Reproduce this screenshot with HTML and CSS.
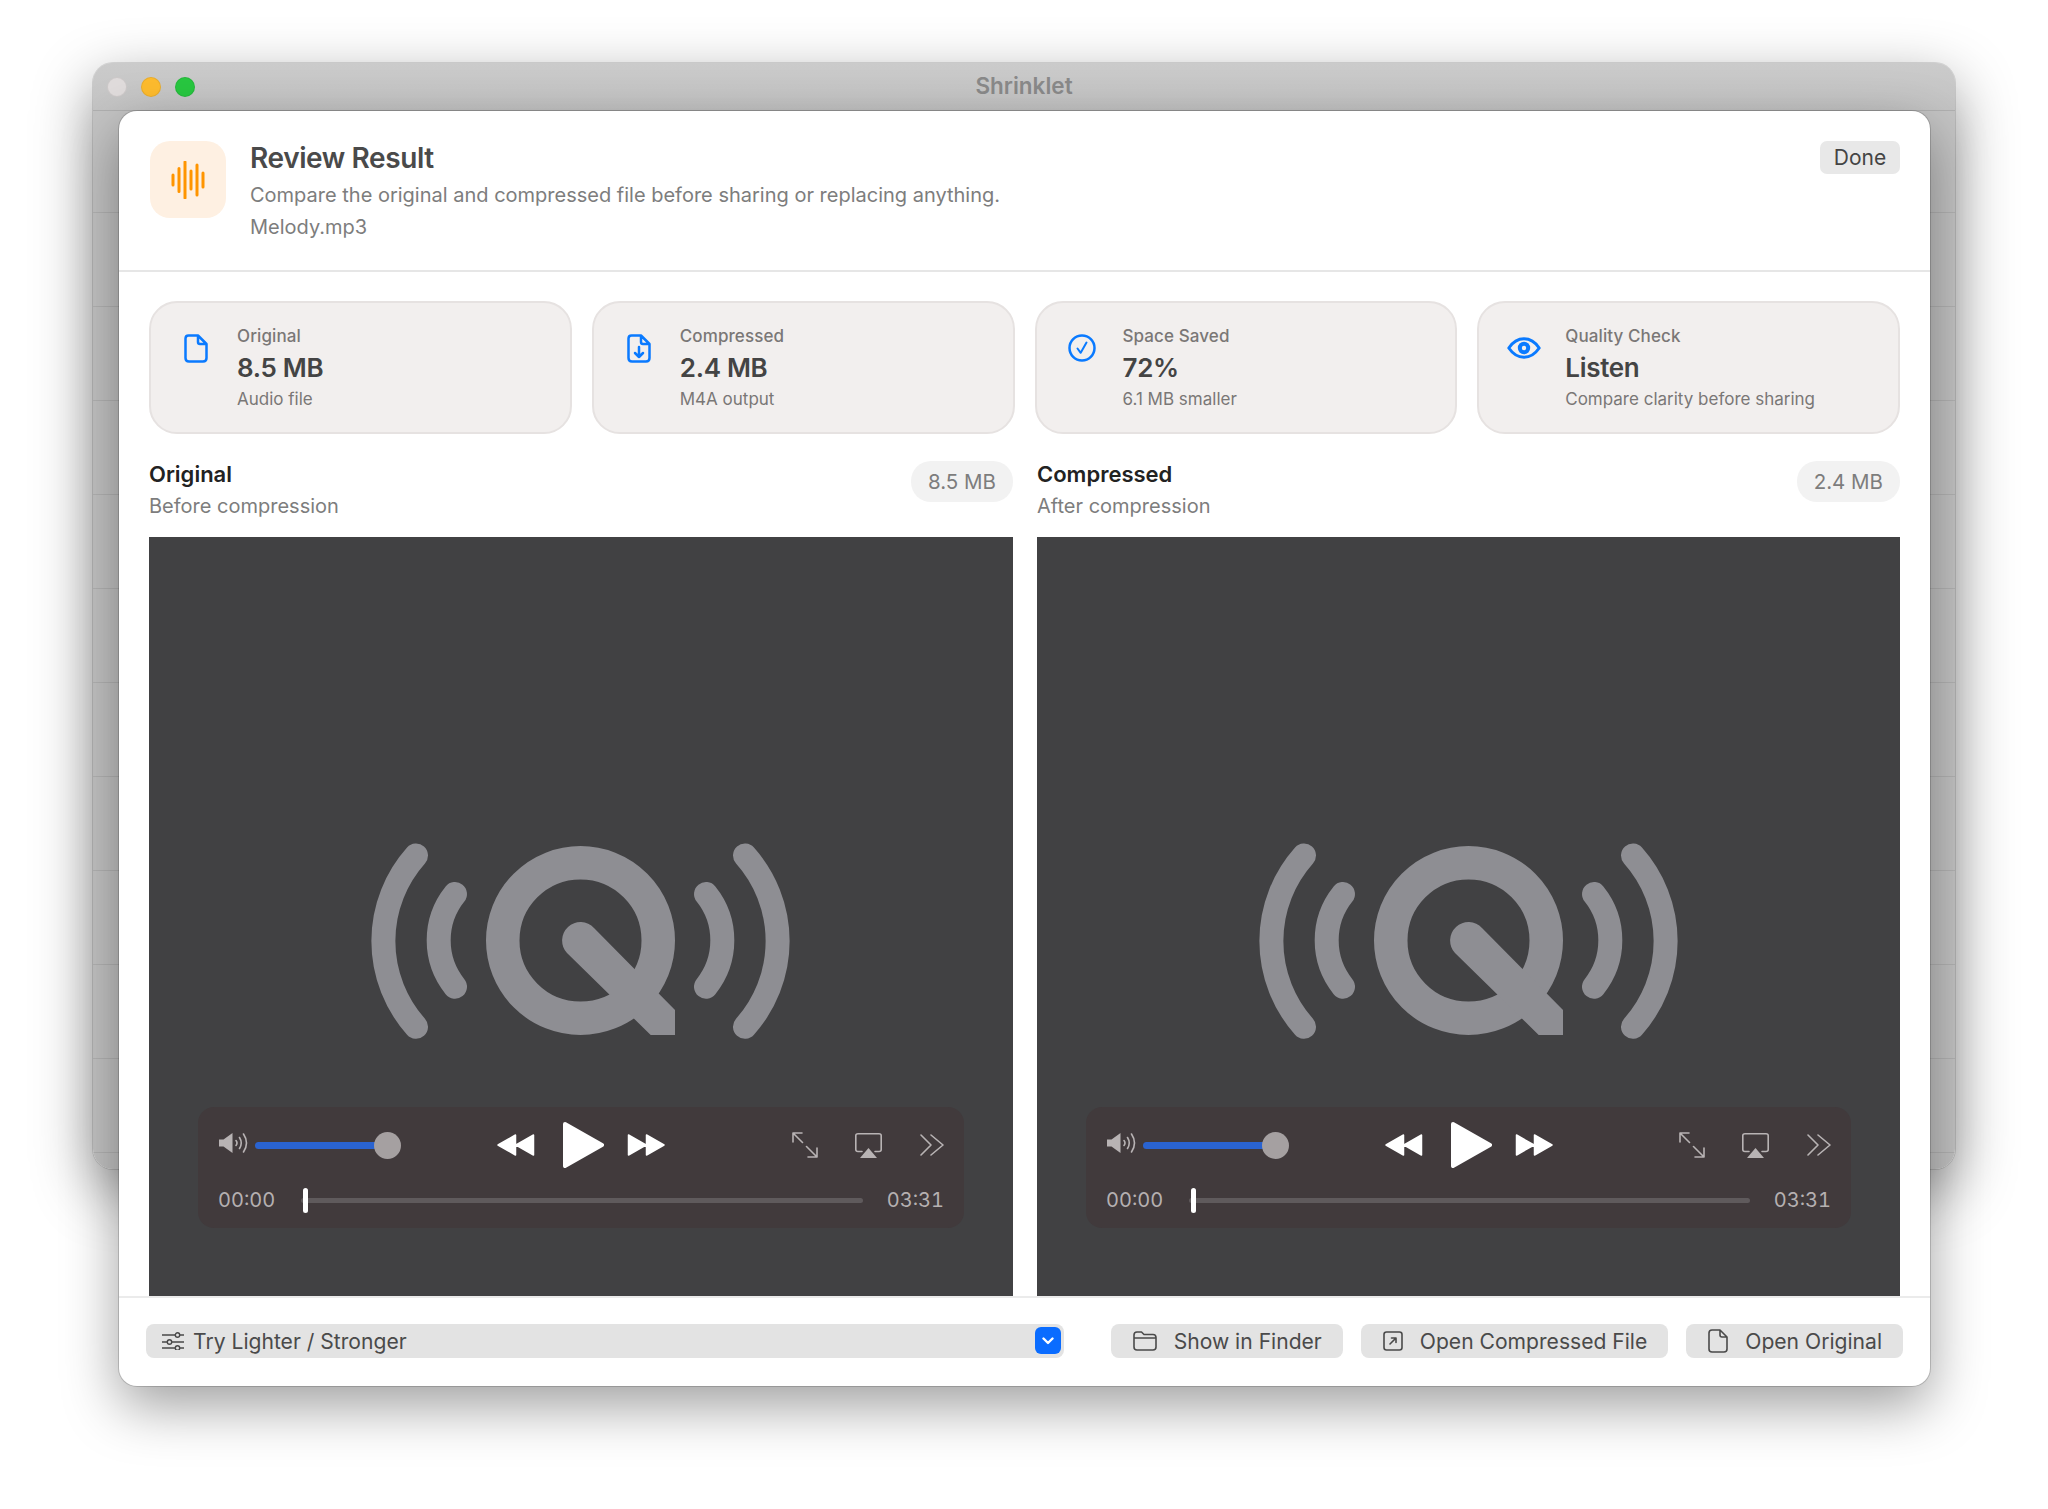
FILE: index.html
```html
<!DOCTYPE html>
<html>
    <head>
        <meta charset="utf-8">
        <title>Shrinklet</title>
        <link rel="stylesheet" href="styles.css">
    </head>
    <body>
        <svg class="sprite" width="0" height="0">
            <symbol id="q-logo" viewBox="0 0 480 240">
                <path class="q-arc" d="M76 35.500A128.6 128.6 0 0 0 76 206.700"/>
                <path class="q-arc" d="M115 74A74 74 0 0 0 115 166.7"/>
                <path class="q-arc" d="M405 35.500A128.6 128.6 0 0 1 405 206.700"/>
                <path class="q-arc" d="M366 74A74 74 0 0 1 366 166.7"/>
                <circle class="q-ring" cx="240.5" cy="120.5" r="77.75"/>
                <path class="q-tail" d="M254 108L335 190V215H310.7L227 133A18 18 0 0 1 254 108Z"/>
            </symbol>
            <symbol id="volume" viewBox="0 0 29 22">
                <path class="fill" d="M0 7.5H4.5L13.5 1V21L4.5 14.5H0Z"/>
                <path class="line" d="M17 8.5Q19 11 17 13.5M20.5 5.5Q24 11 20.5 16.5M24.5 2Q30.5 11 24.5 20"/>
            </symbol>
            <symbol id="rewind" viewBox="0 0 38 22">
                <path class="solid" d="M1 11L18.5 1V21ZM19 11L36.5 1V21Z"/>
            </symbol>
            <symbol id="forward" viewBox="0 0 38 22">
                <path class="solid" d="M1.5 1L19 11L1.5 21ZM19.5 1L37 11L19.5 21Z"/>
            </symbol>
            <symbol id="play" viewBox="0 0 41 46">
                <path class="solid-thick" d="M2 2L39 23L2 44Z"/>
            </symbol>
            <symbol id="expand" viewBox="0 0 26 26">
                <path class="line" d="M1 1L10.5 10.5M1 10V1H10M25 25L14.5 14.5M25 16V25H16"/>
            </symbol>
            <symbol id="airplay" viewBox="0 0 27 25">
                <path class="line" d="M7 18.5H3Q.8 18.5 .8 16.5V2.5Q.8 .8 3 .8H24Q26.2 .8 26.2 2.5V16.5Q26.2 18.5 24 18.5H20"/>
                <path class="fill" d="M13.5 15L22 25H5Z"/>
            </symbol>
            <symbol id="more" viewBox="0 0 24 22">
                <path class="line" d="M1 1L11 11L1 21M11 1L23 11L11 21"/>
            </symbol>
        </svg>

        <div class="window">
            <div class="titlebar">
                <span class="light light-close"></span>
                <span class="light light-min"></span>
                <span class="light light-max"></span>
                <span class="window-title">Shrinklet</span>
            </div>

            <div class="sheet">
                <div class="sheet-header">
                    <div class="app-tile">
                        <svg width="36" height="38" viewBox="0 0 36 38">
                            <path class="wave" d="M3 14V24M9 7.500V30.500M15 1V37M21 10V28M27 4V34M33 12V26"/>
                        </svg>
                    </div>
                    <div class="header-text">
                        <div class="header-title">Review Result</div>
                        <div class="header-line">Compare the original and compressed file before sharing or replacing anything.</div>
                        <div class="header-line header-file">Melody.mp3</div>
                    </div>
                    <div class="done-btn">Done</div>
                </div>

                <div class="sheet-body">
                    <div class="cards">
                        <div class="card">
                            <div class="card-icon">
                                <svg width="24" height="29" viewBox="0 0 24 29">
                                    <path class="blue" d="M4.500 1.500H14L22.500 10V24Q22.500 27.500 19 27.500H5Q1.500 27.500 1.500 24V4.500Q1.500 1.500 4.500 1.500ZM14 1.500V8Q14 10 16 10H22.500"/>
                                </svg>
                            </div>
                            <div>
                                <div class="card-label">Original</div>
                                <div class="card-value">8.5 MB</div>
                                <div class="card-sub">Audio file</div>
                            </div>
                        </div>
                        <div class="card">
                            <div class="card-icon">
                                <svg width="24" height="29" viewBox="0 0 24 29">
                                    <path class="blue" d="M4.500 1.500H14L22.500 10V24Q22.500 27.500 19 27.500H5Q1.500 27.500 1.500 24V4.500Q1.500 1.500 4.500 1.500ZM14 1.500V8Q14 10 16 10H22.500M12 13V23M8 19L12 23L16 19"/>
                                </svg>
                            </div>
                            <div>
                                <div class="card-label">Compressed</div>
                                <div class="card-value">2.4 MB</div>
                                <div class="card-sub">M4A output</div>
                            </div>
                        </div>
                        <div class="card">
                            <div class="card-icon">
                                <svg width="28" height="28" viewBox="0 0 28 28">
                                    <circle class="blue" cx="14" cy="14" r="12.500"/>
                                    <path class="blue thin" d="M9.500 14.500L12.700 18.800L18.500 8.500"/>
                                </svg>
                            </div>
                            <div>
                                <div class="card-label">Space Saved</div>
                                <div class="card-value">72%</div>
                                <div class="card-sub">6.1 MB smaller</div>
                            </div>
                        </div>
                        <div class="card">
                            <div class="card-icon">
                                <svg width="34" height="22" viewBox="0 0 34 22">
                                    <path class="blue eye" d="M1.800 11Q8 1.800 17 1.800T32.200 11Q26 20.200 17 20.200T1.800 11Z"/>
                                    <circle class="blue-fill" cx="17" cy="11" r="6.200"/>
                                    <circle class="card-bg-fill" cx="17" cy="11" r="2.200"/>
                                </svg>
                            </div>
                            <div>
                                <div class="card-label">Quality Check</div>
                                <div class="card-value">Listen</div>
                                <div class="card-sub">Compare clarity before sharing</div>
                            </div>
                        </div>
                    </div>

                    <div class="compare">
                        <div class="compare-col">
                            <div class="col-head">
                                <div>
                                    <div class="col-title">Original</div>
                                    <div class="col-sub">Before compression</div>
                                </div>
                                <div class="size-pill">8.5 MB</div>
                            </div>
                            <div class="player">
                                <svg class="player-logo"><use href="#q-logo"/></svg>
                                <div class="controls">
                                    <div class="controls-top">
                                        <svg class="ic-volume"><use href="#volume"/></svg>
                                        <div class="volume-track"><span class="volume-thumb"></span></div>
                                        <svg class="ic-rewind"><use href="#rewind"/></svg>
                                        <svg class="ic-play"><use href="#play"/></svg>
                                        <svg class="ic-forward"><use href="#forward"/></svg>
                                        <svg class="ic-expand"><use href="#expand"/></svg>
                                        <svg class="ic-airplay"><use href="#airplay"/></svg>
                                        <svg class="ic-more"><use href="#more"/></svg>
                                    </div>
                                    <div class="controls-bottom">
                                        <span class="time">00:00</span>
                                        <div class="scrub"><span class="scrub-knob"></span></div>
                                        <span class="time">03:31</span>
                                    </div>
                                </div>
                            </div>
                        </div>

                        <div class="compare-col">
                            <div class="col-head">
                                <div>
                                    <div class="col-title">Compressed</div>
                                    <div class="col-sub">After compression</div>
                                </div>
                                <div class="size-pill">2.4 MB</div>
                            </div>
                            <div class="player">
                                <svg class="player-logo"><use href="#q-logo"/></svg>
                                <div class="controls">
                                    <div class="controls-top">
                                        <svg class="ic-volume"><use href="#volume"/></svg>
                                        <div class="volume-track"><span class="volume-thumb"></span></div>
                                        <svg class="ic-rewind"><use href="#rewind"/></svg>
                                        <svg class="ic-play"><use href="#play"/></svg>
                                        <svg class="ic-forward"><use href="#forward"/></svg>
                                        <svg class="ic-expand"><use href="#expand"/></svg>
                                        <svg class="ic-airplay"><use href="#airplay"/></svg>
                                        <svg class="ic-more"><use href="#more"/></svg>
                                    </div>
                                    <div class="controls-bottom">
                                        <span class="time">00:00</span>
                                        <div class="scrub"><span class="scrub-knob"></span></div>
                                        <span class="time">03:31</span>
                                    </div>
                                </div>
                            </div>
                        </div>
                    </div>
                </div>

                <div class="sheet-footer">
                    <div class="popup">
                        <svg width="22" height="18" viewBox="0 0 22 18">
                            <path class="btn-line" d="M0 3H22M0 10H22M0 16H22"/>
                            <circle class="btn-dot" cx="15.500" cy="3" r="2.200"/>
                            <circle class="btn-dot" cx="7.500" cy="10" r="2.200"/>
                            <circle class="btn-dot" cx="15.500" cy="16" r="2.200"/>
                        </svg>
                        <span class="popup-text">Try Lighter / Stronger</span>
                        <span class="popup-stepper">
                            <svg width="12" height="8" viewBox="0 0 12 8"><path class="chevron" d="M1.500 1.500L6 6L10.500 1.500"/></svg>
                        </span>
                    </div>
                    <div class="btn">
                        <svg width="24" height="20" viewBox="0 0 24 20">
                            <path class="btn-line" d="M1 4Q1 1 4 1H8.500L11 3.500H20Q23 3.500 23 6.500V16Q23 19 20 19H4Q1 19 1 16ZM1 7H23"/>
                        </svg>
                        <span>Show in Finder</span>
                    </div>
                    <div class="btn">
                        <svg width="20" height="20" viewBox="0 0 20 20">
                            <rect class="btn-line" x="1" y="1" width="18" height="18" rx="2.500"/>
                            <path class="btn-line" d="M7 13L13 7M8.500 7H13V11.500"/>
                        </svg>
                        <span>Open Compressed File</span>
                    </div>
                    <div class="btn">
                        <svg width="20" height="24" viewBox="0 0 20 24">
                            <path class="btn-line" d="M4 1H12L19 8V20Q19 23 16 23H4Q1 23 1 20V4Q1 1 4 1ZM12 1V6Q12 8 14 8H19"/>
                        </svg>
                        <span>Open Original</span>
                    </div>
                </div>
            </div>
        </div>
    </body>
</html>
```

FILE: styles.css
```css
html,body{
    margin: 0px;
    background-color: #fff;
    font-family: "Inter", "Liberation Sans", sans-serif;
}

body{
    width: 2048px;
    height: 1509px;
    overflow: hidden;
    padding: 63px 93px 0;
    box-sizing: border-box;
}

.sprite{
    position: absolute;
}

.window{
    position: relative;
    width: 1862px;
    height: 1106px;
    border-radius: 20px;
    background: repeating-linear-gradient(to bottom, #c4c4c4 0, #c4c4c4 93px, #b4b4b4 93px, #b4b4b4 94px) 0 56px;
    box-shadow: 0 20px 60px rgba(0,0,0,0.42), 0 0 0 1px rgba(0,0,0,0.12);
}

.titlebar{
    display: flex;
    align-items: center;
    height: 48px;
    padding-left: 14px;
    gap: 14px;
    background: linear-gradient(#cbcbcb, #c4c4c4);
    border-bottom: 1px solid #b0b0b0;
    border-radius: 20px 20px 0 0;
    box-sizing: border-box;
    position: relative;
}

.light{
    width: 20px;
    height: 20px;
    border-radius: 50%;
    box-sizing: border-box;
    border: 1px solid rgba(0,0,0,0.08);
}

.light-close{ background: #e0dcdc; }
.light-min{ background: #febc2e; }
.light-max{ background: #28c840; }

.window-title{
    position: absolute;
    left: 0;
    right: 0;
    top: 9px;
    text-align: center;
    font-size: 22.500px;
    line-height: 28px;
    font-weight: 600;
    color: #8a8a8a;
}

.sheet{
    position: absolute;
    left: 26px;
    top: 48px;
    width: 1811px;
    height: 1275px;
    background: #fff;
    border-radius: 18px;
    box-shadow: 0 20px 55px rgba(0,0,0,0.38), 0 0 0 1px rgba(0,0,0,0.16);
    display: flex;
    flex-direction: column;
    overflow: hidden;
}

.sheet-header{
    display: flex;
    height: 161px;
    padding: 30px 30px 0 31px;
    gap: 24px;
    box-sizing: border-box;
    border-bottom: 2px solid #e6e6e6;
}

.app-tile{
    width: 76px;
    height: 77px;
    border-radius: 20px;
    background: #fef0e2;
    display: flex;
    align-items: center;
    justify-content: center;
}

.wave{
    stroke: #ff9500;
    stroke-width: 3px;
    stroke-linecap: round;
    fill: none;
}

.header-text{
    flex: 1;
}

.header-title{
    font-size: 28px;
    line-height: 34px;
    font-weight: 600;
    letter-spacing: -0.4px;
    color: #4a4a4a;
}

.header-line{
    font-size: 20px;
    line-height: 26px;
    margin-top: 7px;
    color: #7d7d7d;
}

.header-file{
    margin-top: 6px;
}

.done-btn{
    width: 80px;
    height: 33px;
    line-height: 33px;
    text-align: center;
    border-radius: 7px;
    background: #e8e8e8;
    font-size: 21px;
    color: #444;
}

.sheet-body{
    flex: 1;
    padding: 29px 30px 0;
    display: flex;
    flex-direction: column;
}

.cards{
    display: grid;
    grid-template-columns: repeat(4, 1fr);
    gap: 20px;
}

.card{
    display: flex;
    height: 133px;
    padding: 22px 0 0 21px;
    gap: 17px;
    box-sizing: border-box;
    background: #f2efee;
    border: 2px solid #e6e2e1;
    border-radius: 28px;
}

.card-icon{
    width: 48px;
    height: 46px;
    display: flex;
    align-items: center;
    justify-content: center;
}

.card-label{
    font-size: 17px;
    line-height: 22px;
    font-weight: 500;
    letter-spacing: 0.1px;
    color: #7a7776;
}

.card-value{
    font-size: 26px;
    line-height: 34px;
    font-weight: 600;
    letter-spacing: -0.3px;
    margin-top: 4px;
    color: #444;
}

.card-sub{
    font-size: 17px;
    line-height: 22px;
    margin-top: 3px;
    color: #7a7776;
}

.blue{
    fill: none;
    stroke: #0a7aff;
    stroke-width: 2.500px;
    stroke-linejoin: round;
    stroke-linecap: round;
}

.thin{ stroke-width: 2px; }
.eye{ stroke-width: 3px; }
.blue-fill{ fill: #0a7aff; }
.card-bg-fill{ fill: #f2efee; }

.compare{
    display: grid;
    grid-template-columns: 864px 863px;
    gap: 24px;
    margin-top: 27px;
}

.col-head{
    display: flex;
    justify-content: space-between;
    height: 76px;
}

.col-title{
    font-size: 22px;
    line-height: 28px;
    font-weight: 600;
    margin-top: -1px;
    color: #222;
}

.col-sub{
    font-size: 20px;
    line-height: 26px;
    margin-top: 5px;
    color: #7d7d7d;
}

.size-pill{
    height: 41px;
    line-height: 41px;
    padding: 0 17px;
    border-radius: 20px;
    background: #f2f2f2;
    font-size: 20.500px;
    color: #7d7d7d;
}

.player{
    position: relative;
    height: 759px;
    background: #414143;
    display: flex;
    justify-content: center;
}

.player-logo{
    width: 480px;
    height: 240px;
    margin: 283px 2px 0 0;
}

.q-arc{
    fill: none;
    stroke: #8e8e93;
    stroke-width: 24px;
    stroke-linecap: round;
}

.q-ring{
    fill: none;
    stroke: #8e8e93;
    stroke-width: 33.500px;
}

.q-tail{
    fill: #8e8e93;
}

.controls{
    position: absolute;
    left: 49px;
    right: 49px;
    bottom: 68px;
    height: 121px;
    border-radius: 16px;
    background: #413a3c;
    padding: 0 20px 0 21px;
    box-sizing: border-box;
}

.controls-top{
    display: flex;
    align-items: center;
    height: 76px;
}

.line{
    fill: none;
    stroke: #b8b3b4;
    stroke-width: 1.600px;
    stroke-linecap: round;
    stroke-linejoin: round;
}

.fill{ fill: #b8b3b4; }

.solid{
    fill: #fff;
    stroke: #fff;
    stroke-width: 1.500px;
    stroke-linejoin: round;
}

.solid-thick{
    fill: #fff;
    stroke: #fff;
    stroke-width: 4px;
    stroke-linejoin: round;
}

.ic-volume{
    width: 29px;
    height: 22px;
    margin-top: -4px;
}

.volume-track{
    position: relative;
    width: 133px;
    height: 7px;
    margin-left: 7px;
    border-radius: 4px;
    background: #2a63d0;
}

.volume-thumb{
    position: absolute;
    right: -13px;
    top: -10px;
    width: 27px;
    height: 27px;
    border-radius: 50%;
    background: #a5a0a1;
}

.ic-rewind{
    width: 38px;
    height: 22px;
    margin-left: 109px;
}

.ic-play{
    width: 41px;
    height: 46px;
    margin-left: 28px;
}

.ic-forward{
    width: 38px;
    height: 22px;
    margin-left: 23px;
}

.ic-expand{
    width: 26px;
    height: 26px;
    margin-left: auto;
}

.ic-airplay{
    width: 27px;
    height: 25px;
    margin-left: 37px;
}

.ic-more{
    width: 24px;
    height: 22px;
    margin-left: 38px;
}

.controls-bottom{
    display: flex;
    align-items: center;
    height: 34px;
    margin-left: -1px;
}

.time{
    font-size: 20px;
    font-variant-numeric: tabular-nums;
    color: #b5b0b1;
}

.scrub{
    position: relative;
    flex: 1;
    height: 5px;
    margin: 0 24px 0 26px;
    border-radius: 3px;
    background: #5f5a5c;
}

.scrub-knob{
    position: absolute;
    left: 2px;
    top: -10px;
    width: 5px;
    height: 25px;
    border-radius: 3px;
    background: #fff;
}

.sheet-footer{
    display: flex;
    align-items: center;
    height: 90px;
    padding: 0 27px 2px;
    gap: 18px;
    box-sizing: border-box;
    border-top: 2px solid #ebebeb;
}

.popup{
    position: relative;
    flex: 1;
    display: flex;
    align-items: center;
    height: 34px;
    padding-left: 16px;
    gap: 9px;
    margin-right: 29px;
    border-radius: 8px;
    background: #e3e3e3;
}

.popup-text,
.btn span{
    font-size: 21.100px;
    color: #4a4a4a;
}

.popup-stepper{
    position: absolute;
    right: 3px;
    top: 3px;
    width: 26px;
    height: 27px;
    border-radius: 6px;
    background: #0a6cff;
    display: flex;
    align-items: center;
    justify-content: center;
}

.chevron{
    fill: none;
    stroke: #fff;
    stroke-width: 2.400px;
    stroke-linecap: round;
    stroke-linejoin: round;
}

.btn{
    display: flex;
    align-items: center;
    height: 34px;
    padding: 0 21px 0 22px;
    gap: 17px;
    border-radius: 8px;
    background: #e3e3e3;
}

.btn-line{
    fill: none;
    stroke: #4a4a4a;
    stroke-width: 1.600px;
    stroke-linecap: round;
    stroke-linejoin: round;
}

.btn-dot{
    fill: #e3e3e3;
    stroke: #4a4a4a;
    stroke-width: 1.400px;
}
```
